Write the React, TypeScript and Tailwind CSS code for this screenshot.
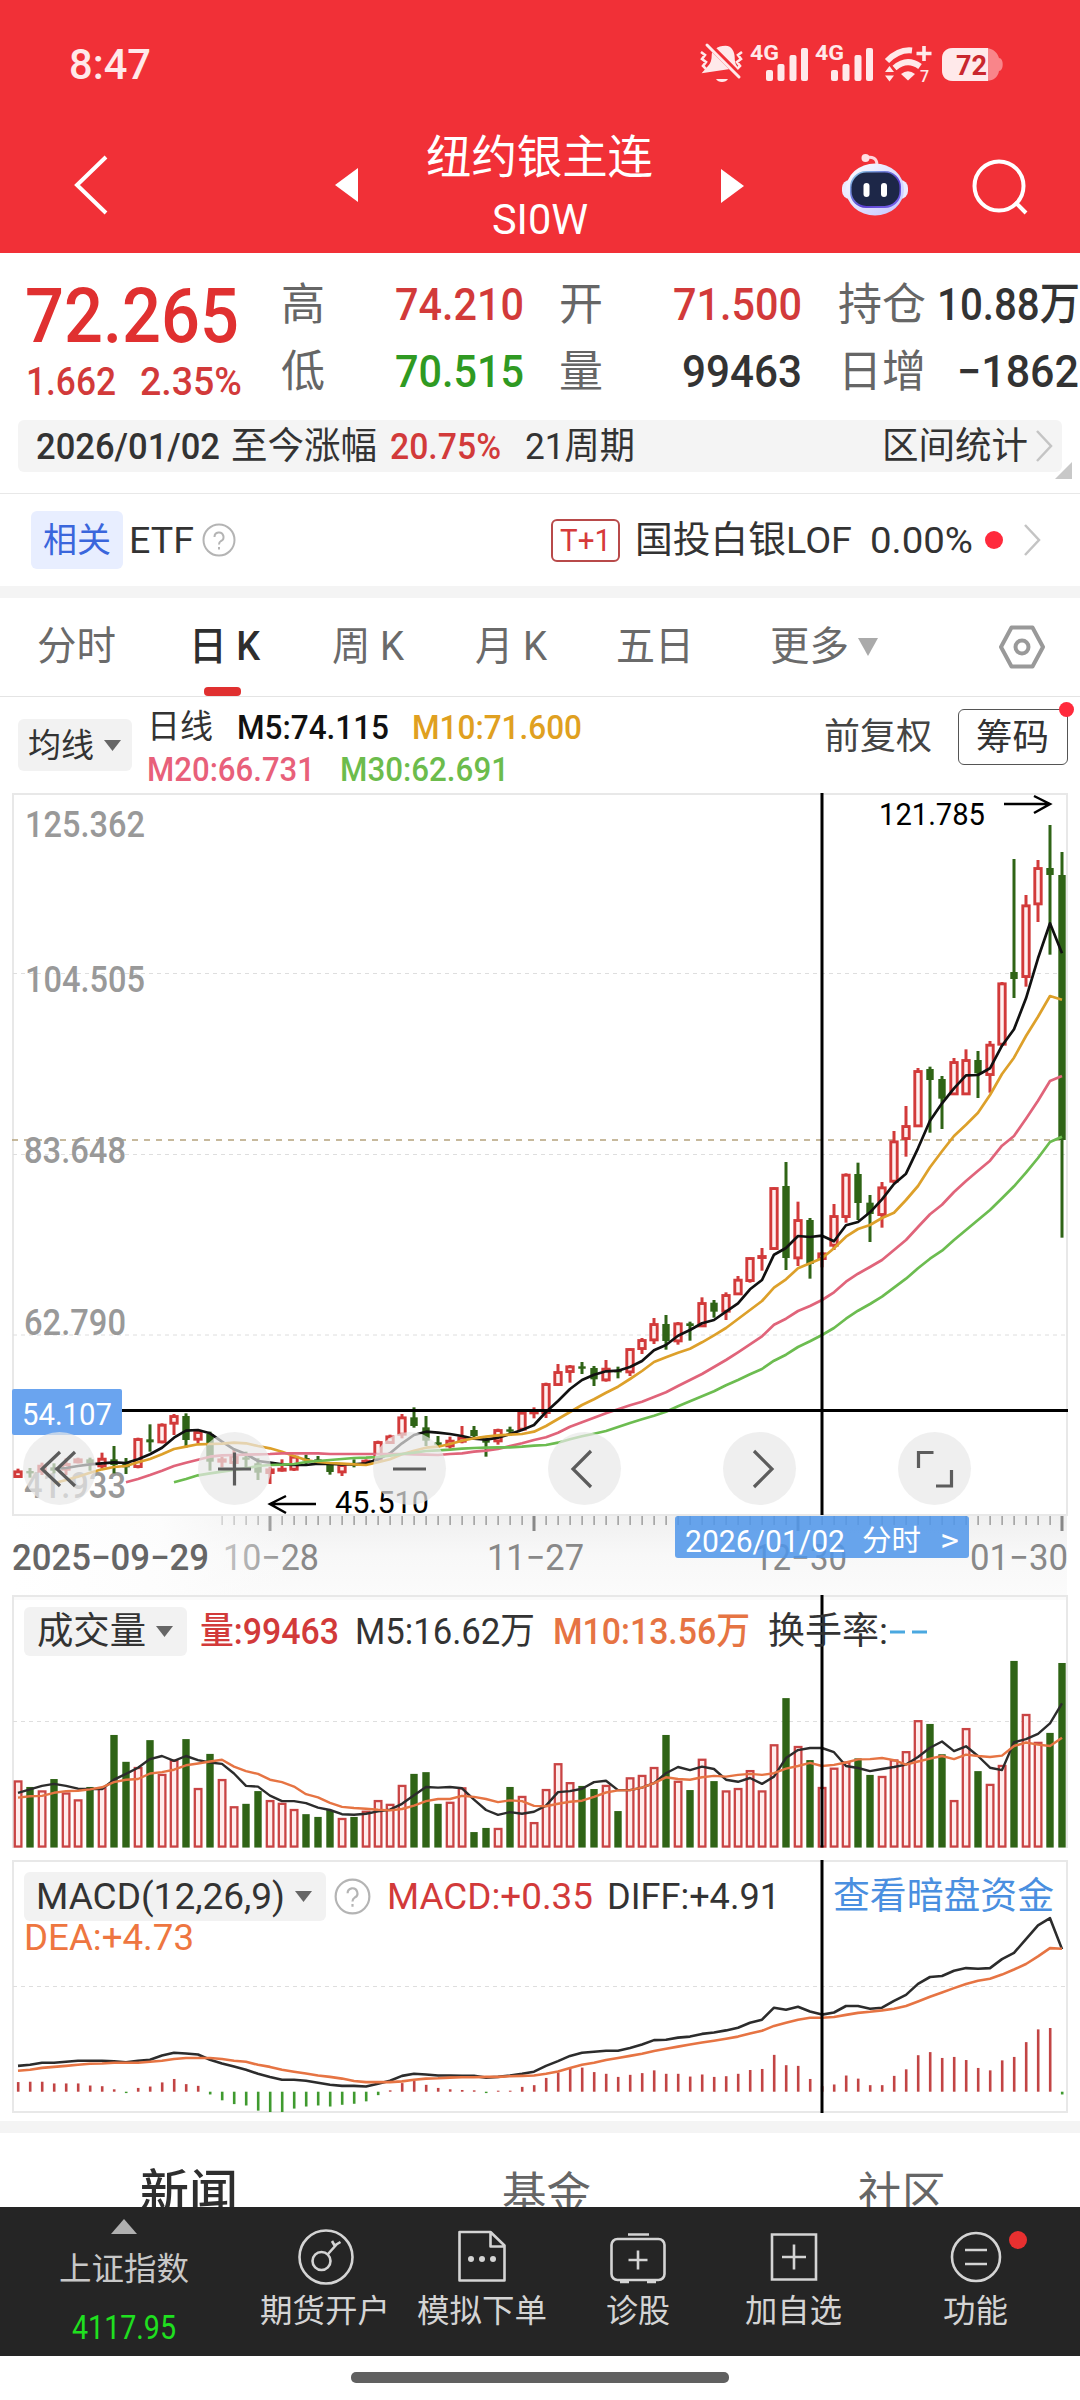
import React, { useLayoutEffect, useRef } from "react";

const FONT = "font-['Roboto','Noto_Sans_CJK_SC',sans-serif]";
const SVG_FONT = "'Roboto','Noto Sans CJK SC',sans-serif";

/** Text squeezed or stretched horizontally so that it fills the given width. */
function T({ w, className = "", children }: { w: number; className?: string; children: React.ReactNode }) {
  const ref = useRef<HTMLSpanElement>(null);
  useLayoutEffect(() => {
    const el = ref.current;
    if (!el) return;
    el.style.transform = "none";
    const natural = el.getBoundingClientRect().width;
    if (natural > 0) el.style.transform = `scaleX(${w / natural})`;
  }, [w, children]);
  return (
    <span className={`block shrink-0 whitespace-pre leading-none ${className}`} style={{ width: w }}>
      <span ref={ref} className="inline-block origin-left leading-none">
        {children}
      </span>
    </span>
  );
}

/* ---------- chart data ---------- */

type Candle = [string, number, number, number, number];

const third = (base: number, rows: Candle[]): Candle[] =>
  rows.map(([c, h, t, b, l]) => [c, base + h / 3, base + t / 3, base + b / 3, base + l / 3]);

const candles: Candle[] = [
  ...third(1180, [
    ["r", 866, 872, 892, 894], ["g", 864, 873, 879, 893], ["r", 848, 855, 876, 885], ["g", 850, 862, 872, 880],
    ["r", 835, 850, 870, 885], ["r", 833, 836, 848, 850], ["g", 833, 838, 850, 872], ["r", 818, 834, 860, 866],
    ["g", 798, 838, 855, 880], ["g", 834, 848, 862, 882], ["r", 773, 775, 862, 865], ["g", 733, 778, 787, 815],
    ["r", 730, 732, 788, 790], ["r", 702, 706, 732, 765], ["g", 700, 708, 780, 803], ["r", 750, 754, 780, 790],
    ["g", 755, 762, 845, 872], ["r", 830, 836, 846, 862], ["r", 810, 825, 850, 860], ["g", 815, 832, 838, 862],
    ["g", 835, 850, 878, 900], ["r", 860, 866, 880, 912], ["r", 838, 864, 872, 875], ["r", 825, 828, 870, 873],
    ["g", 824, 834, 840, 852], ["g", 828, 838, 850, 855], ["g", 850, 853, 876, 884], ["r", 850, 853, 878, 888],
    ["g", 838, 850, 856, 862], ["r", 838, 840, 848, 850], ["r", 782, 784, 840, 842], ["r", 764, 767, 790, 792],
    ["r", 702, 710, 765, 775], ["g", 682, 712, 738, 743], ["g", 708, 742, 782, 798], ["g", 768, 787, 793, 803],
    ["r", 770, 780, 800, 806], ["r", 738, 770, 786, 790], ["g", 738, 750, 768, 772], ["g", 775, 778, 788, 830],
    ["r", 746, 748, 785, 794], ["g", 740, 748, 754, 768], ["r", 695, 696, 750, 750], ["r", 682, 692, 698, 715],
  ]),
  ...third(1130, [
    ["r", 758, 760, 850, 864], ["r", 702, 724, 766, 766], ["r", 705, 707, 727, 758], ["g", 696, 709, 714, 732],
    ["g", 708, 714, 748, 768], ["r", 690, 714, 752, 755], ["g", 710, 720, 724, 745], ["r", 655, 655, 728, 738],
    ["r", 624, 628, 658, 672], ["r", 564, 580, 632, 642], ["g", 555, 582, 633, 659], ["r", 576, 578, 635, 644],
    ["g", 575, 580, 588, 632], ["r", 502, 517, 590, 590], ["g", 510, 518, 545, 563], ["r", 487, 493, 546, 570],
    ["r", 438, 447, 494, 494], ["r", 382, 382, 454, 458], ["r", 354, 376, 384, 422], ["r", 172, 172, 358, 358],
    ["g", 96, 168, 384, 420], ["r", 215, 268, 386, 408], ["g", 264, 270, 402, 446], ["r", 366, 368, 388, 412],
    ["r", 222, 256, 348, 360], ["r", 130, 132, 262, 278], ["g", 98, 132, 219, 270], ["g", 195, 218, 252, 336],
    ["r", 156, 170, 256, 293], ["r", 3, 32, 156, 160],
  ]),
  ...third(780, [
    ["r", 978, 1036, 1078, 1130], ["r", 864, 871, 1040, 1040], ["g", 860, 867, 900, 1058], ["g", 888, 897, 956, 1047],
    ["r", 834, 844, 944, 944], ["r", 808, 838, 944, 944], ["g", 813, 840, 880, 954], ["r", 783, 792, 886, 938],
    ["r", 606, 608, 795, 796], ["g", 237, 576, 597, 654], ["r", 345, 374, 592, 620], ["r", 240, 262, 374, 426],
    ["g", 135, 264, 285, 524], ["g", 216, 285, 1080, 1373],
  ]),
];

type Segment = [number, number, number[]];

const px = (i: number) => 18 + 12 * i;

/** Units per pixel in the volume and MACD series. */
const UNIT = 2.904;

/** Each segment is [first index, base y, offsets in units below the base]. */
const path = (segs: Segment[], unit = 3) =>
  "M" + segs.flatMap(([start, base, ys]) => ys.map((v, k) => `${px(start + k)} ${(base + v / unit).toFixed(1)}`)).join("L");

const ma5 = path([
  [3, 1180, [866, 864, 858, 853, 850, 847, 849, 838, 823, 803, 773, 752, 750, 760, 785, 808, 822, 843, 848, 853, 855, 855, 851, 852, 853, 853, 850, 838, 820, 790, 765, 755, 758, 762, 768, 776, 779, 773, 762, 750, 735]],
  [44, 1130, [846, 813, 777, 750, 734, 724, 722, 711, 693, 661, 645, 617, 600, 580, 570, 545, 520, 478, 450, 374, 354, 318, 321, 317, 334, 286, 276, 247, 208, 162, 131, 55]],
  [76, 780, [1022, 970, 925, 886, 885, 865, 797, 748, 655, 535, 430, 520]],
]);
const ma10 = path([
  [3, 1180, [910, 900, 890, 878, 868, 861, 858, 847, 837, 823, 807, 800, 793, 792, 791, 788, 790, 798, 805, 815, 828, 840, 846, 849, 851, 853, 855, 847, 838, 823, 812, 803, 800, 792, 782, 775, 770, 766, 764, 762, 755]],
  [44, 1130, [888, 867, 846, 825, 808, 788, 770, 747, 723, 696, 682, 668, 656, 637, 616, 594, 567, 540, 513, 473, 448, 415, 400, 385, 355, 320, 297, 285, 264, 248, 210, 168, 112, 64]],
  [78, 780, [1068, 1034, 998, 945, 882, 833, 768, 710, 648, 659]],
]);
const ma20 = path([
  [9, 1180, [907, 897, 885, 872, 858, 848, 839, 830, 826, 825, 824, 823, 822, 820, 820, 820, 820, 822, 822, 822, 822, 822, 822, 822, 823, 824, 825, 822, 820, 815, 812, 807, 798, 790, 780]],
  [44, 1130, [922, 908, 890, 877, 863, 850, 838, 826, 815, 801, 787, 768, 750, 732, 711, 690, 667, 643, 619, 584, 566, 543, 528, 510, 487, 455, 431, 411, 390, 360, 330, 291, 253, 224, 186, 153, 122, 92]],
  [82, 780, [1097, 1068, 1016, 962, 903, 888]],
]);
const ma30 = path([
  [13, 1180, [907, 897, 886, 880, 875, 870, 865, 858, 855, 854, 852, 846, 843, 840, 837, 834, 833, 831, 827, 822, 818, 813, 811, 809, 806, 804, 803, 802, 802, 800, 797]],
  [44, 1130, [945, 938, 928, 919, 911, 903, 891, 879, 868, 857, 845, 829, 814, 799, 784, 766, 750, 733, 717, 692, 674, 651, 634, 615, 594, 566, 542, 522, 500, 473, 446, 415, 386, 362, 330, 300, 270, 240, 205, 169, 128, 84, 36, 20]],
]);

const volume = [
  585, 601, 614, 578, 620, 640, 601, 605, 450, 528, 546, 465, 566, 525, 462, 607, 505, 581, 660, 650, 613, 642, 650, 668,
  680, 688, 668, 694, 688, 673, 642, 653, 598, 563, 558, 650, 647, 605, 732, 720, 723, 601, 630, 706, 610, 535, 590, 598,
  607, 598, 671, 576, 569, 546, 450, 586, 610, 522, 584, 614, 607, 555, 614, 480, 343, 485, 523, 604, 548, 530, 518, 566,
  572, 524, 500, 410, 418, 506, 642, 433, 555, 595, 540, 235, 392, 473, 444, 241,
];
const vma5 = path([[0, 1580, [
  618, 608, 598, 592, 598, 606, 607, 607, 580, 563, 545, 520, 511, 525, 511, 523, 530, 534, 562, 598, 600, 626, 642, 642,
  648, 661, 668, 680, 682, 679, 672, 667, 650, 625, 601, 603, 601, 605, 638, 668, 682, 674, 679, 673, 655, 616, 613, 606,
  587, 583, 610, 610, 603, 590, 561, 543, 552, 542, 549, 580, 586, 575, 592, 571, 517, 494, 488, 488, 500, 540, 546, 555,
  549, 543, 536, 514, 487, 469, 497, 483, 511, 545, 552, 471, 462, 447, 416, 358,
]]], UNIT);
const vma10 = path([[0, 1580, [
  632, 628, 627, 618, 613, 612, 608, 602, 587, 580, 578, 562, 558, 551, 538, 533, 527, 522, 542, 555, 563, 580, 587, 600,
  622, 631, 647, 659, 662, 664, 667, 669, 665, 655, 642, 636, 636, 627, 630, 636, 645, 640, 642, 656, 657, 650, 644, 641,
  630, 617, 611, 610, 603, 590, 573, 578, 580, 573, 569, 571, 566, 563, 566, 561, 548, 540, 531, 540, 537, 530, 521, 520,
  517, 523, 536, 527, 519, 511, 520, 507, 511, 514, 510, 482, 472, 478, 482, 458,
]]], UNIT);

const hist = [
  1458, 1457, 1457, 1462, 1462, 1462, 1468, 1470, 1479, 1490, 1475, 1471, 1459, 1449, 1464, 1469, 1494, 1511, 1522, 1526,
  1541, 1545, 1545, 1535, 1529, 1526, 1529, 1524, 1521, 1514, 1496, 1482, 1461, 1455, 1466, 1475, 1479, 1481, 1482, 1490,
  1483, 1483, 1472, 1467, 1446, 1430, 1420, 1416, 1429, 1434, 1443, 1437, 1432, 1424, 1434, 1434, 1442, 1436, 1443, 1441,
  1434, 1423, 1420, 1379, 1409, 1411, 1449, 1470, 1465, 1439, 1448, 1467, 1467, 1440, 1421, 1380, 1371, 1388, 1385, 1394,
  1417, 1424, 1395, 1385, 1342, 1305, 1301, 1494,
];
const diff = path([[0, 1580, [
  1411, 1408, 1402, 1402, 1399, 1396, 1396, 1396, 1398, 1401, 1396, 1393, 1381, 1373, 1375, 1378, 1393, 1404, 1413, 1422,
  1434, 1443, 1451, 1451, 1454, 1460, 1466, 1469, 1469, 1471, 1463, 1454, 1440, 1434, 1436, 1439, 1439, 1440, 1440, 1445,
  1443, 1439, 1434, 1428, 1411, 1397, 1382, 1373, 1370, 1367, 1367, 1359, 1349, 1336, 1335, 1329, 1326, 1318, 1314, 1308,
  1300, 1286, 1277, 1242, 1248, 1239, 1253, 1262, 1256, 1237, 1237, 1245, 1242, 1222, 1205, 1173, 1153, 1150, 1135, 1127,
  1129, 1127, 1101, 1083, 1043, 1003, 982, 1072,
]]], UNIT);
const dea = path([[0, 1580, [
  1425, 1422, 1417, 1414, 1411, 1408, 1405, 1404, 1402, 1402, 1402, 1399, 1396, 1391, 1388, 1388, 1388, 1391, 1396, 1399,
  1408, 1414, 1422, 1428, 1433, 1439, 1443, 1448, 1455, 1458, 1458, 1458, 1456, 1451, 1448, 1447, 1445, 1444, 1444, 1443,
  1443, 1441, 1440, 1439, 1434, 1427, 1417, 1408, 1402, 1394, 1388, 1382, 1376, 1368, 1361, 1355, 1349, 1343, 1338, 1332,
  1326, 1317, 1309, 1295, 1286, 1277, 1271, 1271, 1269, 1263, 1257, 1254, 1250, 1245, 1237, 1224, 1210, 1198, 1185, 1173,
  1164, 1158, 1146, 1131, 1115, 1093, 1069, 1071,
]]], UNIT);

const RED = "#d23a3a";
const GREEN = "#2f6416";

/* ---------- header ---------- */

function StatusIcons() {
  const pale = "#ffe9ea";
  return (
    <svg width="320" height="44" viewBox="0 0 320 44" fill={pale}>
      <path d="M5 33l7-8c3-3 4-7 4-12 0-5 6-10 15-10 7 0 10 7 10 13 0 6 2 9 4 11z" transform="translate(-3 2) scale(.92)" />
      <path d="M16 38h12c-2 4-10 4-12 0z" />
      <path d="M6 1L42 37" stroke="#f13037" strokeWidth="6" />
      <path d="M7 4L39 36" stroke={pale} strokeWidth="3" strokeLinecap="round" />
      <path d="M1 13l4 3-3 4 4 3-3 4 3 3M42 13l-4 3 3 4-4 3 3 4-3 3" transform="translate(0 -2)" stroke={pale} strokeWidth="2.6" fill="none" />
      {[0, 65].map((dx) => (
        <g key={dx} transform={`translate(${dx} 0)`}>
          <text x="50" y="19" fontSize="21" fontWeight="700" textLength="29" lengthAdjust="spacingAndGlyphs" fontFamily={SVG_FONT}>4G</text>
          <rect x="66" y="29" width="7" height="11" rx="2" />
          <rect x="77.500" y="23" width="7" height="17" rx="2" />
          <rect x="89.500" y="14" width="7" height="26" rx="2" />
          <rect x="101" y="7" width="7" height="33" rx="2" />
        </g>
      ))}
      <path d="M187 20Q199 8 212 9.500" stroke={pale} strokeWidth="6" fill="none" />
      <path d="M194.500 27Q207 16 220 25.500" stroke={pale} strokeWidth="6" fill="none" />
      <path d="M201 33Q208 27.500 215 33L208 39.500z" />
      <path d="M224 5v15M216.500 12.500h15" stroke={pale} strokeWidth="3.600" />
      <path d="M185 31l4.500-6 4.500 6zM185 34.500l4.500 6 4.500-6z" />
      <text x="220" y="41" fontSize="16" fontWeight="500" fontFamily={SVG_FONT}>7</text>
      <path d="M253 7h32c9 0 13 6 14 10 5 0 5 13 0 13-1 6-5 10-14 10h-32c-7 0-11-4-11-11V18c0-7 4-11 11-11z" fill="#f9858a" />
      <path d="M253 7h35v33h-35c-7 0-11-4-11-11V18c0-7 4-11 11-11z" />
      <text x="256" y="34" fontSize="28.500" fontWeight="700" fill="#c9272e" textLength="31" lengthAdjust="spacingAndGlyphs" fontFamily={SVG_FONT}>72</text>
    </svg>
  );
}

function Robot() {
  return (
    <svg width="68" height="64" viewBox="0 0 68 64" className="ml-[97px] shrink-0">
      <defs>
        <linearGradient id="shell" x1="0" y1="0" x2="1" y2="1">
          <stop offset="0" stopColor="#ffffff" />
          <stop offset="1" stopColor="#c3c4ff" />
        </linearGradient>
        <linearGradient id="visor" x1="0" y1="0" x2="1" y2="1">
          <stop offset="0" stopColor="#8fd6e8" />
          <stop offset=".6" stopColor="#5b3fd0" />
          <stop offset="1" stopColor="#7c6cf0" />
        </linearGradient>
      </defs>
      <path d="M24 5c7-2 12 0 12 7" fill="none" stroke="#ffd5dc" strokeWidth="3" />
      <circle cx="24.500" cy="5" r="4" fill="#ffdfe4" />
      <rect x="1" y="27" width="66" height="19" rx="8" fill="#ecebff" />
      <ellipse cx="34" cy="36.500" rx="29" ry="26" fill="url(#shell)" />
      <rect x="9" y="18" width="51" height="37" rx="16" fill="url(#visor)" />
      <rect x="10.500" y="19.500" width="48" height="33.500" rx="15" fill="#1d2748" />
      <rect x="22.500" y="30" width="6" height="14" rx="3" fill="#fff" />
      <rect x="40" y="30" width="6" height="14" rx="3" fill="#fff" />
    </svg>
  );
}

function Header() {
  return (
    <header className="h-[253px] shrink-0 bg-[#f13037] text-white">
      <div className="flex h-[126px] items-center pl-[69px]">
        <T w={82} className="mt-[2px] text-[43px] font-medium text-[#ffe9ea]">8:47</T>
        <div className="ml-[549px]"><StatusIcons /></div>
      </div>
      <div className="flex h-[118px] items-center">
        <svg width="36" height="62" viewBox="0 0 36 62" className="ml-[73px] shrink-0">
          <path d="M33 3L4 31l29 28" fill="none" stroke="#fff" strokeWidth="4" />
        </svg>
        <svg width="23" height="34" viewBox="0 0 23 34" className="ml-[226px] shrink-0">
          <path d="M23 0v34L0 17z" fill="#fff" />
        </svg>
        <div className="ml-[68px] flex w-[227px] shrink-0 flex-col items-center pt-[5px]">
          <T w={227} className="text-[46px]">纽约银主连</T>
          <T w={96} className="mt-[19px] text-[42px]">SI0W</T>
        </div>
        <svg width="23" height="34" viewBox="0 0 23 34" className="ml-[68px] mt-[2px] shrink-0">
          <path d="M0 0v34l23-17z" fill="#fff" />
        </svg>
        <Robot />
        <svg width="60" height="60" viewBox="0 0 60 60" className="ml-[61px] mt-[4px] shrink-0">
          <circle cx="29" cy="29" r="24.500" fill="none" stroke="#fff" strokeWidth="4" />
          <path d="M45 45l11 11" stroke="#fff" strokeWidth="4" />
        </svg>
      </div>
    </header>
  );
}

/* ---------- quote ---------- */

function Chevron({ className = "" }: { className?: string }) {
  return (
    <svg width="18" height="32" viewBox="0 0 18 32" className={`shrink-0 ${className}`}>
      <path d="M2 1l14 15L2 31" fill="none" stroke="#c4c4c4" strokeWidth="2.500" />
    </svg>
  );
}

function Question({ size, className = "" }: { size: number; className?: string }) {
  return (
    <svg width={size} height={size} viewBox="0 0 34 34" className={`shrink-0 ${className}`}>
      <circle cx="17" cy="17" r="15.500" fill="none" stroke="#b4b4b4" strokeWidth="2" />
      <path d="M12.500 14a4.500 4.500 0 1 1 6.500 4c-1.500.9-2 1.500-2 3.500M17 24v2.500" fill="none" stroke="#b4b4b4" strokeWidth="2" />
    </svg>
  );
}

function Quote() {
  return (
    <section className="relative flex h-[241px] shrink-0 flex-col border-b border-[#e8e8e8]">
      <div className="flex h-[154px] w-[1090px]">
        <div className="ml-[25px] w-[225px] pt-[25px]">
          <T w={214} className="text-[76px] font-medium text-[#e03030]">72.265</T>
          <div className="mt-[9px] flex">
            <T w={90} className="ml-[1px] text-[39px] font-medium text-[#d23a3a]">1.662</T>
            <T w={102} className="ml-[24px] text-[39px] font-medium text-[#d23a3a]">2.35%</T>
          </div>
        </div>
        <div className="pt-[29px]">
          <div className="flex h-[45px] items-center text-[45px] text-[#333]">
            <T w={44} className="ml-[31px] text-[44px] text-[#666]">高</T>
            <T w={129} className="ml-[70px] font-medium text-[#d23a3a]">74.210</T>
            <T w={44} className="ml-[35px] text-[44px] text-[#666]">开</T>
            <T w={129} className="ml-[70px] font-medium text-[#d23a3a]">71.500</T>
            <T w={88} className="ml-[36px] text-[44px] text-[#666]">持仓</T>
            <T w={143} className="ml-[11px] font-medium">10.88万</T>
          </div>
          <div className="mt-[22px] flex h-[45px] items-center text-[45px] text-[#333]">
            <T w={44} className="ml-[31px] text-[44px] text-[#666]">低</T>
            <T w={129} className="ml-[70px] font-medium text-[#2f9a22]">70.515</T>
            <T w={44} className="ml-[35px] text-[44px] text-[#666]">量</T>
            <T w={120} className="ml-[79px] font-medium">99463</T>
            <T w={88} className="ml-[36px] text-[44px] text-[#666]">日增</T>
            <T w={122} className="ml-[31px] font-medium">−1862</T>
          </div>
        </div>
      </div>
      <div className="ml-[18px] mt-[13px] flex h-[52px] w-[1044px] items-center rounded-[6px] bg-[#f4f4f4] text-[37px] text-[#333]">
        <T w={184} className="ml-[18px] font-medium">2026/01/02</T>
        <T w={146} className="ml-[11px]">至今涨幅</T>
        <T w={111} className="ml-[13px] font-medium text-[#d23a3a]">20.75%</T>
        <T w={110} className="ml-[24px]">21周期</T>
        <T w={146} className="ml-[247px]">区间统计</T>
        <Chevron className="ml-[7px]" />
      </div>
      <svg width="17" height="17" viewBox="0 0 17 17" className="absolute left-[1055px] top-[209px]">
        <path d="M17 0v17H0z" fill="#c8c8c8" />
      </svg>
    </section>
  );
}

function EtfRow() {
  return (
    <section className="flex h-[92px] shrink-0 items-center text-[37px] text-[#333]">
      <div className="ml-[31px] flex h-[58px] w-[92px] items-center rounded-[6px] bg-[#e8eeff] pl-[12px] text-[34px] text-[#3a66dc]">
        <T w={68}>相关</T>
      </div>
      <T w={65} className="ml-[6px]">ETF</T>
      <Question size={34} className="ml-[8px]" />
      <div className="ml-[315px] flex h-[43px] w-[69px] items-center rounded-[6px] border-2 border-[#b84a4a] pl-[7px] text-[32px] text-[#d63a3a]">
        <T w={51}>T+1</T>
      </div>
      <T w={217} className="ml-[15px]">国投白银LOF</T>
      <T w={103} className="ml-[18px]">0.00%</T>
      <span className="ml-[12px] h-[18px] w-[18px] shrink-0 rounded-full bg-[#ff2a3c]" />
      <Chevron className="ml-[20px]" />
    </section>
  );
}

/* ---------- chart tabs ---------- */

function ChartTabs() {
  return (
    <nav className="relative flex h-[99px] shrink-0 items-center border-b border-[#e4e4e4] text-[40px] text-[#6a6a6a]">
      <T w={79} className="ml-[37px]">分时</T>
      <T w={71} className="ml-[73px] font-medium text-[#2e2e2e]">日 K</T>
      <T w={72} className="ml-[72px]">周 K</T>
      <T w={72} className="ml-[71px]">月 K</T>
      <T w={78} className="ml-[69px]">五日</T>
      <T w={79} className="ml-[76px]">更多</T>
      <svg width="20" height="18" viewBox="0 0 20 18" className="ml-[9px] shrink-0">
        <path d="M0 0h20L10 18z" fill="#aaa" />
      </svg>
      <svg width="46" height="44" viewBox="0 0 46 44" className="ml-[121px] shrink-0">
        <path d="M12.500 2.500h21L44 22 33.500 41.500h-21L2 22z" fill="none" stroke="#999" strokeWidth="4" strokeLinejoin="round" />
        <circle cx="23" cy="22" r="6.500" fill="none" stroke="#999" strokeWidth="4" />
      </svg>
      <span className="absolute left-[204px] top-[89px] h-[9px] w-[37px] rounded-[4px] bg-[#e03030]" />
    </nav>
  );
}

function Down({ className = "" }: { className?: string }) {
  return (
    <svg width="17" height="11" viewBox="0 0 17 11" className={`shrink-0 ${className}`}>
      <path d="M0 0h17L8.500 11z" fill="#666" />
    </svg>
  );
}

function AverageRow() {
  return (
    <div className="flex h-[90px] shrink-0 items-start text-[34px]">
      <div className="ml-[18px] mt-[22px] flex h-[52px] w-[114px] shrink-0 items-center rounded-[6px] bg-[#f2f2f2] pl-[10px] text-[33px] text-[#333]">
        <T w={66}>均线</T>
        <Down className="ml-[10px]" />
      </div>
      <div className="w-[450px] pl-[15px] pt-[13px] font-medium">
        <div className="flex">
          <T w={66} className="text-[33px] font-normal text-[#333]">日线</T>
          <T w={152} className="ml-[24px] text-[#111]">M5:74.115</T>
          <T w={170} className="ml-[23px] text-[#e0a020]">M10:71.600</T>
        </div>
        <div className="mt-[8px] flex">
          <T w={168} className="text-[#e8607a]">M20:66.731</T>
          <T w={169} className="ml-[25px] text-[#6cbc4c]">M30:62.691</T>
        </div>
      </div>
      <T w={108} className="ml-[242px] mt-[22px] text-[36px] text-[#444]">前复权</T>
      <div className="relative ml-[26px] mt-[12px] flex h-[56px] w-[110px] shrink-0 items-center rounded-[6px] border border-[#555] pl-[17px] text-[36px] text-[#333]">
        <T w={73} className="mt-[2px]">筹码</T>
        <span className="absolute -right-[7px] -top-[8px] h-[15px] w-[15px] rounded-full bg-[#ff2a3c]" />
      </div>
    </div>
  );
}

/* ---------- charts ---------- */

type LabelProps = { x: number; y: number; w: number; size: number; fill: string; weight?: number; children: string };

function Label({ x, y, w, size, fill, weight = 400, children }: LabelProps) {
  return (
    <text x={x} y={y} fontSize={size} fill={fill} fontWeight={weight} textLength={w} lengthAdjust="spacingAndGlyphs" fontFamily={SVG_FONT}>
      {children}
    </text>
  );
}

const ROUND_BUTTONS = [
  "M37 20L19 37l18 17M52 20L34 37l18 17",
  "M20 37h33M36.500 20.500v33",
  "M20 37h33",
  "M43 19L25 37l18 18",
  "M31 19l18 18-18 18",
  "M35.500 20.500H20.500V36M53.500 38v16H38",
];

function ControlButtons() {
  return (
    <div className="absolute left-[23px] top-[645px] flex gap-[102px]">
      {ROUND_BUTTONS.map((d, i) => (
        <div key={i} className="h-[73px] w-[73px] rounded-full bg-[#e8e8e8]/70">
          <svg width="73" height="73" viewBox="0 0 73 73">
            <path d={d} fill="none" stroke="#5c5c5c" strokeWidth="3.200" />
          </svg>
        </div>
      ))}
    </div>
  );
}

function PriceChart() {
  const ticks = Array.from({ length: 71 }, (_, k) => k + 17);
  return (
    <div className="relative h-[808px] shrink-0">
      <svg width="1080" height="808" viewBox="0 787 1080 808" className="block">
        <defs>
          <linearGradient id="axisV" x1="0" y1="0" x2="0" y2="1">
            <stop offset="0" stopColor="#efefef" />
            <stop offset=".5" stopColor="#f8f8f8" />
            <stop offset="1" stopColor="#fbfbfb" />
          </linearGradient>
          <linearGradient id="axisFade" x1="0" y1="0" x2="1" y2="0">
            <stop offset="0" stopColor="#fff" stopOpacity="1" />
            <stop offset=".5" stopColor="#fdfdfd" stopOpacity=".95" />
            <stop offset="1" stopColor="#fafafa" stopOpacity="0" />
          </linearGradient>
        </defs>
        <rect x="13" y="1515" width="1054" height="80" fill="url(#axisV)" />
        {ticks.map((i) => {
          const major = i === 21 || i === 43 || i === 65 || i === 87;
          return <rect key={i} x={px(i) - (major ? 1.5 : 0.5)} y={1516} width={major ? 3 : 1.2} height={major ? 15 : 9} fill="#888" />;
        })}
        <Label x={223} y={1570} w={96} size={36} fill="#888">10−28</Label>
        <rect x="13" y="1516" width="290" height="79" fill="url(#axisFade)" />
        <Label x={12} y={1570} w={197} size={36} fill="#666" weight={500}>2025−09−29</Label>
        <Label x={487} y={1570} w={97} size={36} fill="#888">11−27</Label>
        <Label x={754} y={1570} w={93} size={36} fill="#888">12−30</Label>
        <Label x={970} y={1570} w={98} size={36} fill="#888">01−30</Label>

        <rect x="13" y="794" width="1054" height="721" fill="none" stroke="#e8e8e8" strokeWidth="2" />
        {[973.5, 1154.5, 1335].map((y) => (
          <path key={y} d={`M13 ${y}H1066`} stroke="#dedede" strokeWidth="1" strokeDasharray="4 4" />
        ))}
        <path d="M12 1140H1060" stroke="#b5a27c" strokeWidth="1.500" strokeDasharray="6 6" />

        <Label x={25} y={837} w={120} size={37} fill="#999" weight={500}>125.362</Label>
        <Label x={25} y={992} w={120} size={37} fill="#999" weight={500}>104.505</Label>
        <Label x={24} y={1163} w={102} size={37} fill="#999" weight={500}>83.648</Label>
        <Label x={24} y={1335} w={102} size={37} fill="#999" weight={500}>62.790</Label>
        <Label x={24} y={1498} w={102} size={37} fill="#999" weight={500}>41.933</Label>

        {candles.map(([c, high, top, bottom, low], i) => {
          const x = px(i);
          const h = Math.max(bottom - top, 2.4);
          return c === "g" ? (
            <g key={i} fill={GREEN}>
              <rect x={x - 1.5} y={high} width="3" height={low - high} />
              <rect x={x - 3.7} y={top} width="7.400" height={h} />
            </g>
          ) : (
            <g key={i}>
              <rect x={x - 1.5} y={high} width="3" height={low - high} fill={RED} />
              <rect x={x - 3.2} y={top + 1.2} width="6.400" height={Math.max(h - 2, 1)} fill="#fff0f0" stroke={RED} strokeWidth="2.900" />
            </g>
          );
        })}
        <g fill="none" strokeWidth="2.700" strokeLinejoin="round">
          <path d={ma5} stroke="#111" />
          <path d={ma10} stroke="#dda02a" />
          <path d={ma20} stroke="#e0647a" />
          <path d={ma30} stroke="#6cbc50" />
        </g>

        <path d="M822 793V1515M13 1410.500H1068" stroke="#000" strokeWidth="3" />
        <Label x={879} y={825} w={106} size={31.5} fill="#000">121.785</Label>
        <path d="M1004 804h45M1034 796l16 8-16 9" fill="none" stroke="#000" strokeWidth="2.500" />
        <Label x={335} y={1513} w={94} size={31.5} fill="#000">45.510</Label>
        <path d="M316 1504h-45M286 1496l-16 8 16 9" fill="none" stroke="#000" strokeWidth="2.500" />
        <rect x="12" y="1389" width="110" height="46" rx="2" fill="#6aa4ef" />
        <Label x={22} y={1425} w={90} size={32} fill="#fff">54.107</Label>
        <rect x="675" y="1516" width="294" height="42" rx="3" fill="#4f96ea" fillOpacity=".86" />
        <Label x={685} y={1552} w={160} size={32} fill="#fff">2026/01/02</Label>
        <Label x={862} y={1551} w={59} size={29} fill="#fff">分时</Label>
        <Label x={940} y={1551} w={19} size={32} fill="#fff">&gt;</Label>
      </svg>
      <ControlButtons />
    </div>
  );
}

function VolumeChart() {
  const floor = 1580 + 777 / UNIT;
  return (
    <div className="relative h-[256px] shrink-0">
      <svg width="1080" height="256" viewBox="0 1595 1080 256" className="block">
        <rect x="13" y="1595" width="1054" height="5" fill="#fafafa" />
        <path d="M13 1848V1596H1067V1848" fill="none" stroke="#e8e8e8" strokeWidth="2" />
        <path d="M13 1721.500H1066" stroke="#dedede" strokeWidth="1" strokeDasharray="4 4" />
        {volume.map((v, i) => {
          const x = px(i);
          const y = 1580 + v / UNIT;
          return candles[i][0] === "g" ? (
            <rect key={i} x={x - 3.7} y={y} width="7.400" height={floor - y} fill={GREEN} />
          ) : (
            <rect key={i} x={x - 3.2} y={y} width="6.600" height={floor - 1 - y} fill="#ffecec" stroke="#c94444" strokeWidth="2.300" />
          );
        })}
        <g fill="none" strokeWidth="2.400" strokeLinejoin="round">
          <path d={vma5} stroke="#2c2c2c" />
          <path d={vma10} stroke="#e67443" />
        </g>
        <path d={`M822 1595V${floor}`} stroke="#000" strokeWidth="3" />
      </svg>
      <div className="absolute left-[24px] top-[12px] flex h-[49px] items-center text-[37px] text-[#333]">
        <div className="flex h-[49px] w-[163px] items-center rounded-[6px] bg-[#f2f2f2] pl-[13px]">
          <T w={109}>成交量</T>
          <Down className="ml-[10px]" />
        </div>
        <T w={139} className="ml-[13px] font-medium text-[#d23a3a]">量:99463</T>
        <T w={180} className="ml-[16px]">M5:16.62万</T>
        <T w={197} className="ml-[18px] font-medium text-[#e67443]">M10:13.56万</T>
        <T w={120} className="ml-[18px]">换手率:</T>
        <svg width="40" height="4" viewBox="0 0 40 4" className="ml-px shrink-0">
          <path d="M1 2h15M23 2h15" stroke="#4aa8e0" strokeWidth="3" />
        </svg>
      </div>
    </div>
  );
}

function MacdChart() {
  return (
    <div className="relative h-[270px] shrink-0">
      <svg width="1080" height="270" viewBox="0 1851 1080 270" className="block">
        <rect x="13" y="1861" width="1054" height="251" fill="none" stroke="#e8e8e8" strokeWidth="2" />
        <path d="M13 1986.500H1066" stroke="#dedede" strokeWidth="1" strokeDasharray="4 4" />
        <g>
          {hist.map((v, i) => (
            <rect
              key={i}
              x={px(i) - 1.1}
              y={1580 + Math.min(v, 1486) / UNIT}
              width="2.600"
              height={Math.max(Math.abs(v - 1486) / UNIT, 1)}
              fill={v > 1486 ? "#3f9a2f" : "#c24444"}
            />
          ))}
        </g>
        <g fill="none" strokeWidth="2.600" strokeLinejoin="round">
          <path d={diff} stroke="#2c2c2c" />
          <path d={dea} stroke="#e67443" />
        </g>
        <path d="M822 1860V2113" stroke="#000" strokeWidth="3" />
      </svg>
      <div className="absolute left-[24px] top-[21px] text-[37px] text-[#333]">
        <div className="flex h-[49px] items-center">
          <div className="flex h-[49px] w-[302px] items-center rounded-[6px] bg-[#f2f2f2] pl-[12px]">
            <T w={249}>MACD(12,26,9)</T>
            <Down className="ml-[10px]" />
          </div>
          <Question size={37} className="ml-[8px]" />
          <T w={206} className="ml-[16px] text-[#d23a3a]">MACD:+0.35</T>
          <T w={173} className="ml-[14px]">DIFF:+4.91</T>
          <T w={221} className="ml-[53px] text-[#4a8fe0]">查看暗盘资金</T>
        </div>
        <T w={170} className="-mt-[2px] text-[#ee7640]">DEA:+4.73</T>
      </div>
    </div>
  );
}

/* ---------- bottom ---------- */

function NavItem({ label, w, className, children }: { label: string; w: number; className: string; children: React.ReactNode }) {
  return (
    <div className={`flex shrink-0 flex-col items-center ${className}`}>
      <svg width="60" height="60" viewBox="0 0 60 60" fill="none" stroke="#d4d4d4" strokeWidth="2.600">
        {children}
      </svg>
      <T w={w} className="mt-[8px] text-[32px] text-[#d4d4d4]">{label}</T>
    </div>
  );
}

function BottomBar() {
  return (
    <footer className="relative flex h-[149px] shrink-0 items-start bg-[#252525]">
      <div className="ml-[58px] flex w-[132px] shrink-0 flex-col items-center pt-[12px]">
        <svg width="26" height="15" viewBox="0 0 26 15">
          <path d="M13 0l13 15H0z" fill="#b0b0b0" />
        </svg>
        <T w={130} className="mt-[19px] text-[32px] text-[#c8c8c8]">上证指数</T>
        <T w={104} className="mt-[25px] text-[34px] text-[#1fe01f]">4117.95</T>
      </div>
      <NavItem label="期货开户" w={130} className="ml-[70px] pt-[20px]">
        <circle cx="31" cy="30" r="26.500" />
        <circle cx="26.500" cy="34" r="9" />
        <path d="M33 27l9-10M37 14l2.500 4.500 6-3.500" />
      </NavItem>
      <NavItem label="模拟下单" w={130} className="ml-[27px] pt-[20px]">
        <path d="M7.500 5h31l14 13.500V53.500h-45zM38.500 5v14.500h14" strokeLinejoin="round" />
        <g fill="#d4d4d4" stroke="none">
          <circle cx="19" cy="32" r="3" />
          <circle cx="30" cy="32" r="3" />
          <circle cx="41" cy="32" r="3" />
        </g>
      </NavItem>
      <NavItem label="诊股" w={64} className="ml-[59px] pt-[20px]">
        <rect x="3.500" y="12" width="53" height="41" rx="6" />
        <path d="M20 7.500h21M12 55h9M39 55h9M20.500 33h19M30 23.500v19" />
      </NavItem>
      <NavItem label="加自选" w={97} className="ml-[75px] pt-[20px]">
        <path d="M8 7.500h44v45H8zM18 30h24M30 17.500v25" />
      </NavItem>
      <NavItem label="功能" w={65} className="ml-[101px] pt-[20px]">
        <circle cx="30" cy="30" r="24" />
        <path d="M19 23h22M19 37h22" />
      </NavItem>
      <span className="absolute left-[1009px] top-[24px] h-[18px] w-[18px] rounded-full bg-[#e83030]" />
    </footer>
  );
}

export default function App() {
  return (
    <main className={`flex h-[2400px] w-[1080px] flex-col overflow-hidden bg-white ${FONT}`}>
      <Header />
      <Quote />
      <EtfRow />
      <div className="h-[12px] shrink-0 bg-[#f4f4f4]" />
      <ChartTabs />
      <AverageRow />
      <PriceChart />
      <VolumeChart />
      <MacdChart />
      <div className="h-[12px] shrink-0 bg-[#f4f4f4]" />
      <div className="flex h-[74px] shrink-0 items-start overflow-hidden pt-[36px] text-[45px] text-[#666]">
        <T w={98} className="ml-[140px] text-[49px] font-medium text-[#2e2e2e]">新闻</T>
        <T w={89} className="ml-[264px] mt-[3px]">基金</T>
        <T w={88} className="ml-[267px] mt-[3px]">社区</T>
      </div>
      <BottomBar />
      <div className="flex flex-1 justify-center pt-[16px]">
        <span className="h-[11px] w-[378px] rounded-[5px] bg-[#606060]" />
      </div>
    </main>
  );
}
